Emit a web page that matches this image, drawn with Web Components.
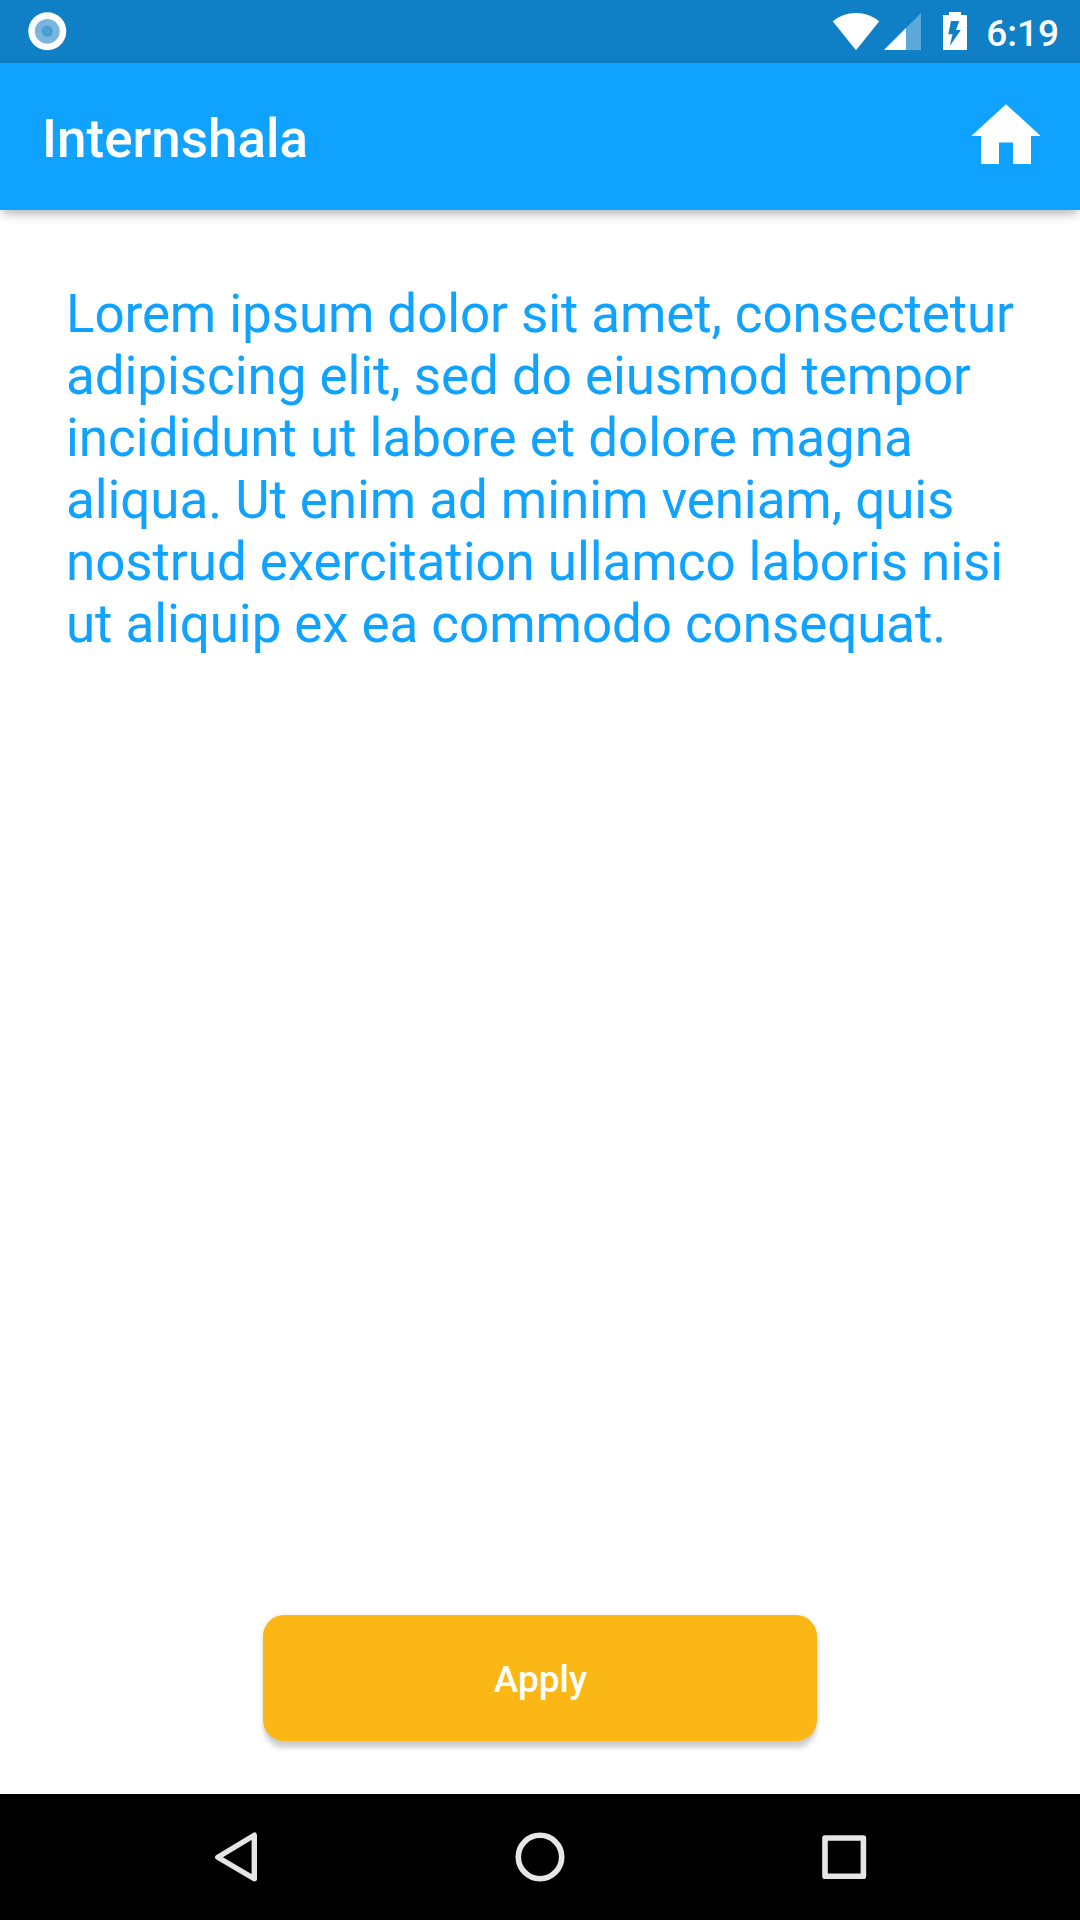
<!DOCTYPE html>
<html lang="en">
<head>
<meta charset="utf-8">
<title>Internshala</title>
<style>
  body { margin: 0; background: #fff; }
</style>
</head>
<body>
<phone-screen>
  <status-bar slot="top">6:19</status-bar>
  <app-bar slot="top">Internshala</app-bar>
  <body-copy>
    <span style="letter-spacing:-.12px">Lorem ipsum dolor sit amet, consectetur</span>
    <span style="letter-spacing:-.085px">adipiscing elit, sed do eiusmod tempor</span>
    <span style="letter-spacing:-.04px">incididunt ut labore et dolore magna</span>
    <span style="letter-spacing:-.09px">aliqua. Ut enim ad minim veniam, quis</span>
    <span style="letter-spacing:-.08px">nostrud exercitation ullamco laboris nisi</span>
    <span style="letter-spacing:-.1px">ut aliquip ex ea commodo consequat.</span>
  </body-copy>
  <apply-button>Apply</apply-button>
  <nav-bar slot="bottom"></nav-bar>
</phone-screen>
<script>
function define(name, html) {
  const template = document.createElement('template');
  template.innerHTML = html;
  customElements.define(name, class extends HTMLElement {
    constructor() {
      super();
      this.attachShadow({ mode: 'open' }).append(template.content.cloneNode(true));
    }
  });
}

define('phone-screen', `
  <style>
    :host { display: flex; flex-direction: column; width: 1080px; height: 1920px; overflow: hidden;
      background: #fff; font-family: Roboto, sans-serif; }
    main { flex: 1; display: flex; flex-direction: column; align-items: center; justify-content: space-between;
      padding: 73px 0 53px; }
  </style>
  <slot name="top"></slot>
  <main><slot></slot></main>
  <slot name="bottom"></slot>`);

define('status-bar', `
  <style>
    :host { display: flex; justify-content: space-between; box-sizing: border-box; height: 63px;
      padding: 0 21px 0 28px; background: #0f7fc6; color: #fff;
      font-size: 37px; font-weight: 500; line-height: 43px; }
    svg { display: block; }
    .right { display: flex; }
    .time { padding-top: 12px; }
  </style>
  <svg width="40" height="63" viewBox="28 0 40 63">
    <circle cx="47.3" cy="31.3" r="19" fill="#fff"/>
    <circle cx="47.3" cy="31.3" r="12.4" fill="#78b6e0"/>
    <circle cx="47.3" cy="31.3" r="5.7" fill="#4a9fd3"/>
  </svg>
  <div class="right">
    <svg width="154" height="63" viewBox="832 0 154 63">
      <path d="M832.7 21.3Q843 13 856 13T879.3 21.3L856 50.2Z" fill="#fff"/>
      <path d="M921 13V50H884Z" fill="#5ca8db"/>
      <path d="M906 28V50H884Z" fill="#fff"/>
      <path fill="#fff" fill-rule="evenodd" d="M949 12H961V15H967V50H943V15H949ZM951 21L948.3 34.3H952.5L949.8 46L960.8 30H956L959.3 21Z"/>
    </svg>
    <span class="time"><slot></slot></span>
  </div>`);

define('app-bar', `
  <style>
    :host { display: flex; align-items: center; justify-content: space-between; box-sizing: border-box;
      height: 147px; padding: 0 39px 0 42px; background: #10a2ff; color: #fff;
      font-size: 53px; font-weight: 500; line-height: 62px;
      box-shadow: 0 7px 10px -3px rgba(0,0,0,.27), 0 0 10px rgba(0,0,0,.06); }
    span { padding-top: 5px; }
    svg { display: block; }
  </style>
  <span><slot></slot></span>
  <svg width="70" height="147" viewBox="971 63 70 147">
    <path fill="#fff" d="M1006 104.2L1040.7 136H1031V164H1013V142.6H999V164H981.2V136H971.3Z"/>
  </svg>`);

define('body-copy', `
  <style>
    :host { display: flex; flex-direction: column; align-self: stretch; padding: 0 59px 0 66px; color: #10a2ff;
      font-size: 53px; line-height: 62px; white-space: nowrap; }
  </style>
  <slot></slot>`);

define('apply-button', `
  <style>
    :host { display: block; }
    button { display: flex; align-items: center; justify-content: center; box-sizing: border-box;
      width: 554px; height: 126px; margin: 0; padding: 2px 0 0 1px; border: 0; border-radius: 21px;
      background: #fbb716; color: #fff; font: 500 37px/43px Roboto, sans-serif;
      box-shadow: 0 8px 5px -1px rgba(0,0,0,.18), 0 0 5px rgba(0,0,0,.08); }
  </style>
  <button type="button"><slot></slot></button>`);

define('nav-bar', `
  <style>
    :host { display: flex; justify-content: center; gap: 254px; height: 126px; background: #000; }
    svg { display: block; fill: none; stroke: #e6e6e6; stroke-linejoin: round; }
  </style>
  <svg width="50" height="126" viewBox="211 1794 50 126"><path stroke-width="5.4" d="M217.8 1857.2L254.3 1835.2V1878.8Z"/></svg>
  <svg width="50" height="126" viewBox="515 1794 50 126"><circle cx="540" cy="1857" r="21.7" stroke-width="5.6"/></svg>
  <svg width="50" height="126" viewBox="819 1794 50 126"><rect x="825" y="1838" width="38.4" height="38.2" stroke-width="5.6"/></svg>`);
</script>
</body>
</html>
